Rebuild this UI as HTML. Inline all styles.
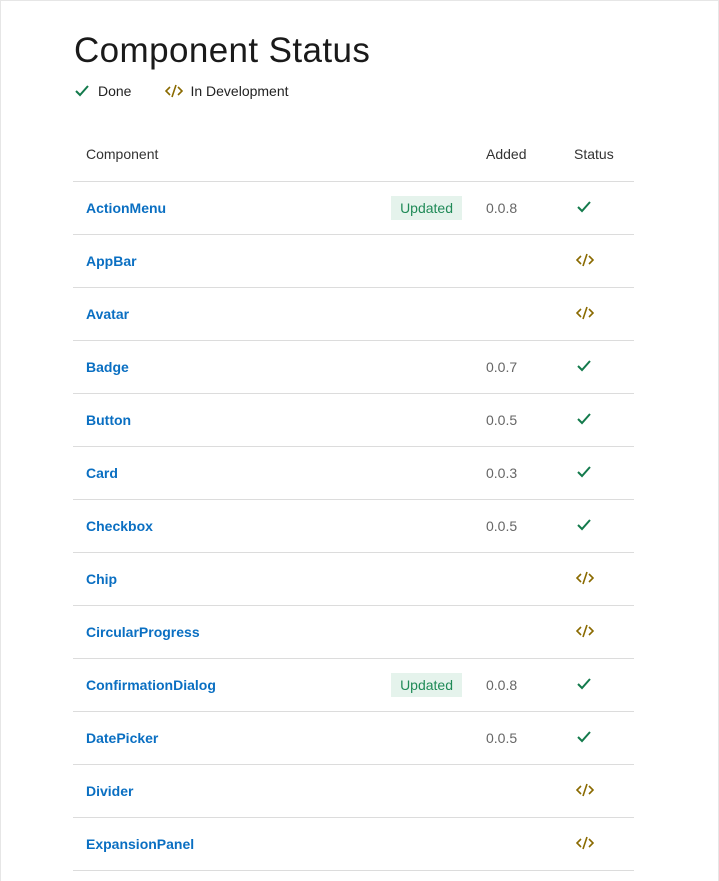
<!DOCTYPE html>
<html><head><style>
html,body{margin:0;padding:0;background:#fff}
body{width:717px;height:880px;border-left:1px solid #e6e6e6;border-right:1px solid #e6e6e6;border-top:1px solid #e6e6e6;position:relative;font-family:"Liberation Sans",sans-serif;overflow:hidden}
h1{position:absolute;left:73px;top:30px;margin:0;font-weight:400;font-size:35px;color:#1a1a1a;letter-spacing:0.4px;line-height:40px}
.legend{position:absolute;left:73px;top:82px;font-size:14px;color:#222;display:flex;align-items:center}
.legend span{display:inline-flex;align-items:center}
table{position:absolute;left:72px;top:125px;width:561px;border-collapse:collapse}
td,th{height:52px;border-bottom:1px solid #dcdcdc;font-size:14px;padding:0;text-align:left}
th{height:55px;font-weight:400;color:#333}
td.n{padding-left:13px;color:#0a6fc2;font-weight:bold}
th.n{padding-left:13px}
td.v{color:#666}
.b{display:inline-block;background:#e5f3ec;color:#1f8a57;padding:4px 9px;font-size:14px;margin-right:24px}
</style></head><body>
<h1>Component Status</h1>
<div class="legend"><span><svg width="16" height="14" viewBox="0 0 16 14"><path d="M2 7l4 4 8-9" fill="none" stroke="#137a4c" stroke-width="2"/></svg><span style="margin-left:8px">Done</span></span>
<span style="margin-left:34px"><svg width="18" height="14" viewBox="0 0 18 14"><path d="M5 3L1 7l4 4M13 3l4 4-4 4M11 1L7 13" fill="none" stroke="#8a6a00" stroke-width="1.6"/></svg><span style="margin-left:7px">In Development</span></span></div>
<table>
<colgroup><col style="width:300px"><col style="width:113px"><col style="width:88px"><col style="width:60px"></colgroup>
<tr><th class="n">Component</th><th></th><th>Added</th><th>Status</th></tr>
<tbody id="tb"></tbody>
</table>
<script>
var D='<svg width="16" height="14" viewBox="0 0 16 14"><path d="M2 7l4 4 8-9" fill="none" stroke="#137a4c" stroke-width="2"/></svg>';
var I='<svg width="18" height="14" viewBox="0 0 18 14"><path d="M5 3L1 7l4 4M13 3l4 4-4 4M11 1L7 13" fill="none" stroke="#8a6a00" stroke-width="1.6"/></svg>';
var r=[["ActionMenu",1,"0.0.8",1],["AppBar",0,"",0],["Avatar",0,"",0],["Badge",0,"0.0.7",1],["Button",0,"0.0.5",1],["Card",0,"0.0.3",1],["Checkbox",0,"0.0.5",1],["Chip",0,"",0],["CircularProgress",0,"",0],["ConfirmationDialog",1,"0.0.8",1],["DatePicker",0,"0.0.5",1],["Divider",0,"",0],["ExpansionPanel",0,"",0]];
var h='';r.forEach(function(x){h+='<tr><td class="n">'+x[0]+'</td><td style="text-align:right">'+(x[1]?'<span class="b">Updated</span>':'')+'</td><td class="v">'+x[2]+'</td><td style="padding-left:2px">'+(x[3]?D:I)+'</td></tr>';});
document.getElementById('tb').innerHTML=h;
</script>
</body></html>
